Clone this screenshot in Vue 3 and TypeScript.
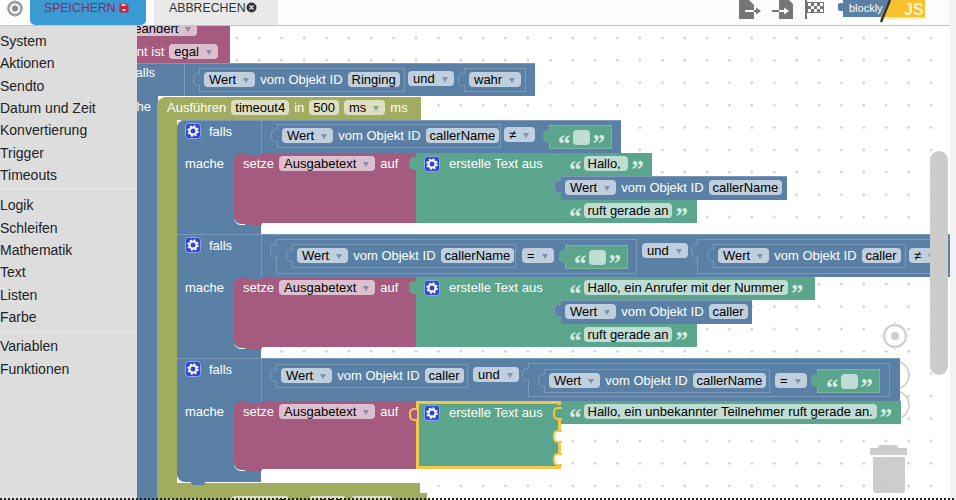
<script setup lang="ts">
type Part = { k: 't' | 'c' | 'd' | 'g' | 'o' | 'e'; s?: string }
interface BlockNode {
  x: number; y: number; w: number; h: number; c: string
  l?: number; t?: number; parts?: Part[]
  tab?: string; r?: string; bump?: boolean; notch?: boolean
}
const T = (s: string): Part => ({ k: 't', s })
const C = (s: string): Part => ({ k: 'c', s })
const D = (s: string): Part => ({ k: 'd', s })
const G: Part = { k: 'g' }
const O: Part = { k: 'o' }
const E: Part = { k: 'e' }

const groups = [
  ['System', 'Aktionen', 'Sendto', 'Datum und Zeit', 'Konvertierung', 'Trigger', 'Timeouts'],
  ['Logik', 'Schleifen', 'Mathematik', 'Text', 'Listen', 'Farbe'],
  ['Variablen', 'Funktionen'],
]

const wert = (id: string): Part[] => [D('Wert'), T('vom Objekt ID'), C(id)]
const empty = (x: number, y: number): BlockNode[] => [
  { x, y, w: 63, h: 24, c: 'green box-g', l: 8, t: 4, parts: [O, C(' '), E], tab: 'green' },
]

function ifBlock(y: number, hdrW: number, headH: number, bodyH: number, pos: 'first' | 'mid' | 'last'): BlockNode[] {
  const column = pos === 'first' ? 'rt' : pos === 'last' ? 'rb' : undefined
  return [
    { x: 177, y, w: 84, h: bodyH, c: 'blue', r: column, bump: pos === 'last' },
    { x: 177, y, w: hdrW, h: headH, c: 'blue hdr', l: 8, t: 3, r: pos === 'first' ? 'rt' : undefined, parts: [G, T('falls')] },
    { x: 185, y: y + headH + 3, w: 50, h: 18, c: 'plain', parts: [T('mache')] },
  ]
}

function setBlock(y: number, h: number, selected: boolean): BlockNode[] {
  return [
    { x: 234, y, w: 182, h, c: 'pink', l: 9, t: 3, r: 'rc', bump: true, notch: true, parts: [T('setze'), D('Ausgabetext'), T('auf')] },
    {
      x: 416, y, w: 145, h, c: selected ? 'green sel' : 'green', l: selected ? 5 : 8, t: selected ? 1 : 3,
      tab: selected ? 'yellow' : 'green', parts: [G, T('erstelle Text aus')],
    },
  ]
}

const textRow = (y: number, w: number, s: string): BlockNode => ({
  x: 561, y, w, h: 23, c: 'green', l: 8, t: 3, tab: 'green', parts: [O, C(s), E],
})
const wertRow = (y: number, w: number, id: string): BlockNode => ({
  x: 561, y, w, h: 24, c: 'blue', l: 4, t: 4, tab: 'blue', parts: wert(id),
})
const box = (x: number, y: number, w: number, h: number, parts: Part[] = [], tab = true): BlockNode => ({
  x, y, w, h, c: 'blue box', l: 4, t: 4, parts, tab: tab ? 'blue' : undefined,
})
const chip = (x: number, y: number, p: Part): BlockNode => ({ x, y, w: 60, h: 16, c: 'plain', parts: [p] })

const nodes: BlockNode[] = [
  // event block, cut off by the toolbox
  { x: 100, y: 0, w: 130, h: 63, c: 'pink' },
  { x: 122, y: 21, w: 90, h: 16, c: 'plain', parts: [D('geändert')] },
  { x: 100, y: 44, w: 125, h: 16, c: 'plain', parts: [T('Element ist'), D('egal')] },
  // outer if
  { x: 100, y: 63, w: 58, h: 437, c: 'blue' },
  { x: 100, y: 63, w: 435, h: 33, c: 'blue hdr' },
  { x: 132, y: 65, w: 40, h: 16, c: 'plain', parts: [T('falls')] },
  { x: 112, y: 99, w: 50, h: 16, c: 'plain', parts: [T('mache')] },
  box(199, 68, 206, 24, wert('Ringing')),
  chip(408, 71, D('und')),
  box(464, 68, 62, 24, [D('wahr')]),
  // timeout block
  { x: 157, y: 97, w: 20, h: 398, c: 'olive', r: 'lt' },
  { x: 157, y: 97, w: 264, h: 23, c: 'olive', l: 10, t: 3, r: 'lt', parts: [T('Ausführen'), C('timeout4'), T('in'), C('500'), D('ms'), T('ms')] },
  { x: 157, y: 483, w: 263, h: 12, c: 'olive' },
  { x: 157, y: 493, w: 270, h: 23, c: 'olive', l: 10, t: 3, parts: [T('Ausführen'), C('timeout5'), T('in'), C('1000'), D('ms'), T('ms')] },

  // first if
  ...ifBlock(120, 444, 33, 114, 'first'),
  box(277, 124, 224, 24, wert('callerName')),
  chip(504, 127, D('≠')),
  ...empty(549, 125),
  ...setBlock(153, 70, false),
  textRow(153, 91, 'Hallo, '),
  wertRow(176, 226, 'callerName'),
  textRow(200, 136, 'ruft gerade an'),

  // second if
  ...ifBlock(234, 773, 43, 124, 'mid'),
  box(276, 239, 361, 35, [], true),
  box(292, 244, 224, 24, wert('callerName')),
  chip(522, 248, D('=')),
  ...empty(565, 245),
  chip(642, 243, D('und')),
  box(697, 239, 260, 35, [], true),
  box(713, 244, 193, 24, wert('caller')),
  chip(909, 248, D('≠')),
  ...setBlock(277, 70, false),
  textRow(277, 254, 'Hallo, ein Anrufer mit der Nummer'),
  wertRow(300, 191, 'caller'),
  textRow(324, 136, 'ruft gerade an'),

  // third if
  ...ifBlock(358, 723, 43, 124, 'last'),
  box(276, 364, 192, 24, wert('caller')),
  chip(473, 367, D('und')),
  box(528, 363, 362, 34, [], true),
  box(544, 369, 226, 24, wert('callerName')),
  chip(775, 373, D('=')),
  ...empty(817, 369),
  ...setBlock(401, 68, true),
  textRow(401, 340, 'Hallo, ein unbekannter Teilnehmer ruft gerade an.'),
  { x: 553, y: 407, w: 9, h: 13, c: 'slot slot-g' },
  { x: 553, y: 430, w: 9, h: 13, c: 'slot' },
  { x: 553, y: 453, w: 9, h: 13, c: 'slot' },
]

const rect = (n: BlockNode) => ({
  left: n.x - 137 + 'px',
  top: n.y - 26 + 'px',
  width: n.w + 'px',
  height: n.h + 'px',
  paddingLeft: (n.l ?? 0) + 'px',
  paddingTop: (n.t ?? 0) + 'px',
})
</script>

<template>
  <div class="page">
    <header class="top">
      <div class="top-main">
        <svg class="target" width="30" height="25" viewBox="0 0 30 25">
          <circle cx="15" cy="8.5" r="6.500" fill="none" stroke="#999" stroke-width="2.500" />
          <circle cx="15" cy="8.5" r="3" fill="#888" />
          <path d="M15 0v2M15 15v2M6.500 8.500h2M21.500 8.500h2" stroke="#bbb" stroke-width="1.500" />
        </svg>
        <button class="save">
          <span>SPEICHERN</span>
          <svg width="10" height="10" viewBox="0 0 10 10">
            <path d="M.5 .5h7l2 2v7h-9z" fill="#c8243f" />
            <rect x="2.500" y="1" width="4" height="2" fill="#f3c0c8" />
            <rect x="3.500" y="6" width="3" height="2" fill="#f3c0c8" />
          </svg>
        </button>
        <button class="cancel">
          <span>ABBRECHEN</span>
          <svg width="11" height="11" viewBox="0 0 11 11">
            <circle cx="5.500" cy="5.500" r="5" fill="#333" />
            <path d="M3.500 3.500l4 4M7.500 3.500l-4 4" stroke="#ddd" stroke-width="1.500" />
          </svg>
        </button>
        <div class="tools">
          <svg width="24" height="20" viewBox="0 0 24 20">
            <path d="M1 0h10l5 5v14H1z" fill="#757575" />
            <path d="M7 11h10" stroke="#fff" stroke-width="2" />
            <path d="M16 11h4" stroke="#757575" stroke-width="2" />
            <path d="M18 7.500l5 3.500-5 3.500z" fill="#757575" />
          </svg>
          <svg width="22" height="20" viewBox="0 0 22 20">
            <path d="M7 0h10l4 4v15H7z" fill="#757575" />
            <path d="M0 11h7" stroke="#757575" stroke-width="2" />
            <path d="M7 11h6" stroke="#fff" stroke-width="2" />
            <path d="M12 7.500l5 3.500-5 3.500z" fill="#fff" />
          </svg>
          <svg width="21" height="20" viewBox="0 0 21 20">
            <path d="M1 0h2v19H1z" fill="#757575" />
            <path d="M3 2h17v11H3z" fill="#757575" />
            <path d="M4 3h3v3H4zM10 3h3v3h-3zM16 3h3v3h-3zM7 6h3v3H7zM13 6h3v3h-3zM4 9h3v3H4zM10 9h3v3h-3zM16 9h3v3h-3z" fill="#fff" />
          </svg>
          <svg class="logo" width="90" height="24" viewBox="0 0 90 24">
            <rect x="6" y="0" width="46" height="17" fill="#5b80a5" />
            <path d="M6 3H3a2 2 0 0 0-2 2v4a2 2 0 0 0 2 2h3z" fill="#5b80a5" />
            <path d="M52 0h36v17H44z" fill="#f7c02c" />
            <path d="M44 17h44v2H43z" fill="#fbeab5" />
            <path d="M53 0l-9 22" stroke="#333" stroke-width="2.500" />
            <text x="12" y="12" class="logo-b">blockly</text>
            <text x="67" y="15" class="logo-j">JS</text>
          </svg>
        </div>
      </div>
      <div class="edge"></div>
    </header>

    <div class="main">
      <nav class="toolbox">
        <template v-for="(group, gi) in groups" :key="gi">
          <div class="group">
            <div v-for="item in group" :key="item" class="tb-item">{{ item }}</div>
          </div>
        </template>
      </nav>

      <section class="workspace">
        <!-- zoom controls stay beneath the blocks -->
        <svg class="controls" width="40" height="100" viewBox="0 0 40 100">
          <circle cx="20" cy="17" r="11" fill="none" stroke="#ccc" stroke-width="2" />
          <circle cx="20" cy="17" r="4" fill="#ccc" />
          <path d="M20 3v5M20 26v5M6 17h5M29 17h5" stroke="#ddd" stroke-width="1.500" />
          <circle cx="20" cy="56" r="14" fill="none" stroke="#ccc" stroke-width="1.500" />
          <circle cx="20" cy="86" r="14" fill="none" stroke="#ccc" stroke-width="1.500" />
        </svg>

        <div
          v-for="(n, i) in nodes"
          :key="i"
          class="node"
          :class="[n.c, n.r]"
          :style="rect(n)"
        >
          <span v-if="n.tab" class="tab" :class="'tab-' + n.tab"></span>
          <span v-if="n.bump" class="bump"></span>
          <span v-if="n.notch" class="notch"></span>
          <template v-for="(p, pi) in n.parts" :key="pi">
            <span v-if="p.k === 't'" class="txt">{{ p.s }}</span>
            <span v-else-if="p.k === 'c'" class="chip">{{ p.s }}</span>
            <span v-else-if="p.k === 'd'" class="chip drop">{{ p.s }}<i class="arrow"></i></span>
            <svg v-else-if="p.k === 'g'" class="gear" width="16" height="16" viewBox="0 0 16 16">
              <rect x=".5" y=".5" width="15" height="15" rx="3" fill="#2f47c9" stroke="#8ea6ee" />
              <circle cx="8" cy="8" r="3.500" fill="none" stroke="#fff" stroke-width="2" />
              <circle cx="8" cy="8" r="5" fill="none" stroke="#fff" stroke-width="1.500" stroke-dasharray="2 1.930" />
            </svg>
            <span v-else-if="p.k === 'o'" class="quote">“</span>
            <span v-else class="quote">”</span>
          </template>
        </div>

        <svg class="trash" width="40" height="50" viewBox="0 0 40 50">
          <path d="M11 1h16l3 3H8z" fill="#ccc" />
          <rect x="1" y="4" width="37" height="7" fill="#ccc" />
          <path d="M4 13h32v33a3 3 0 0 1-3 3H7a3 3 0 0 1-3-3z" fill="#c4c4c4" opacity=".85" />
        </svg>
        <div class="thumb"></div>
      </section>
      <div class="edge"></div>
    </div>
    <div class="cutoff"></div>
  </div>
</template>

<style>
html, body { margin: 0; }
</style>

<style scoped>
.page {
  position: relative;
  width: 956px;
  height: 500px;
  overflow: hidden;
  display: flex;
  flex-direction: column;
  font-family: "Liberation Sans", Arial, sans-serif;
  background: #fff;
}
.top { height: 26px; display: flex; flex: none; }
.top-main {
  flex: 1;
  height: 25px;
  display: flex;
  background: #fcfcfc;
  border-bottom: 1px solid #c4c4c4;
}
.edge { width: 6px; flex: none; background: #f2f2f2; }
.target { flex: none; }
.save, .cancel {
  border: 0;
  height: 25px;
  padding: 0;
  display: flex;
  align-items: flex-start;
  font: 12.3px "Liberation Sans", Arial, sans-serif;
}
.save span, .cancel span { margin-top: 1px; line-height: 14px; }
.save {
  width: 116px;
  margin-right: 8px;
  padding-left: 14px;
  background: #3a9bd3;
  color: #8a2d60;
  border-radius: 0 0 5px 5px;
}
.save svg { margin: 3px 0 0 3px; }
.cancel {
  width: 124px;
  padding-left: 15px;
  background: #e9e9e9;
  color: #333;
}
.cancel svg { margin-top: 2px; }
.tools {
  margin-left: auto;
  margin-right: 23px;
  display: flex;
  align-items: flex-start;
  gap: 10px;
}
.logo { margin-left: 2px; }
.logo-b { font: 11px "Liberation Sans", sans-serif; fill: #fff; }
.logo-j { font: bold 16px "Liberation Sans", sans-serif; fill: #fdf0c4; }

.main { flex: 1; display: flex; min-height: 0; }
.toolbox {
  width: 137px;
  flex: none;
  background: #ddd;
  font-size: 14px;
  color: #222;
}
.group { padding: 4px 0 3px; border-bottom: 1px solid #e6e6e6; }
.group:last-child { border-bottom: 0; padding-top: 3px; }
.tb-item { height: 22.35px; line-height: 22px; }

.workspace {
  position: relative;
  flex: 1;
  overflow: hidden;
  background-color: #fff;
  background-image: radial-gradient(circle at 10.3px 12px, #d0d0d0 1px, transparent 1.6px);
  background-size: 22.4px 22.4px;
}
.controls { position: absolute; left: 738px; top: 293px; }
.trash { position: absolute; left: 732px; top: 418px; }
.thumb {
  position: absolute;
  left: 793px;
  top: 125px;
  width: 18px;
  height: 224px;
  border-radius: 9px;
  background: #ccc;
}

.node {
  position: absolute;
  box-sizing: border-box;
  display: flex;
  align-items: flex-start;
  gap: 5px;
  color: #fff;
  font-size: 13px;
  line-height: 15px;
  white-space: nowrap;
}
.blue { background: #5b80a5; box-shadow: inset 0 1px 0 #7b99b8; }
.pink { background: #a55b80; }
.green { background: #5ba58c; }
.olive { background: #a2ac5f; }
.plain { background: transparent; }
.hdr { box-shadow: inset 0 1px 0 #7b99b8; }
.hdr .txt { margin-top: 1px; }
.hdr::after {
  content: "";
  position: absolute;
  left: 84px;
  top: 0;
  bottom: 0;
  width: 1px;
  background: #7b99b8;
}
.box { box-shadow: none; border: 1px solid #7b99b8; padding-top: 3px !important; }
.box-g { border: 1px solid #78b5a0; background: #5ba58c; }
.rt { border-top-left-radius: 8px; }
.rb { border-bottom-left-radius: 8px; }
.lt { border-top-left-radius: 9px; }
.rc { border-top-left-radius: 8px; border-bottom-left-radius: 8px; }
.rc::after {
  content: "";
  position: absolute;
  left: 0;
  bottom: -1.5px;
  width: 11px;
  height: 7px;
  border-bottom: 1.5px solid #fff;
  border-radius: 0 0 0 8px;
  box-sizing: border-box;
}
.sel { border: 3px solid #f1c84b; background: #5ba58c; overflow: visible; }
.slot {
  background: #fff;
  border: 2px solid #f1c84b;
  border-right: 0;
  border-radius: 5px 0 0 5px;
}
.slot-g { background: #5ba58c; }

.tab {
  position: absolute;
  left: -7px;
  top: 4px;
  width: 7px;
  height: 13px;
  border-radius: 5px 0 0 5px;
}
.tab-green { background: #5ba58c; }
.tab-blue { background: #5b80a5; border: 1px solid #7b99b8; border-right: 0; box-sizing: border-box; }
.tab-yellow {
  background: #a55b80;
  left: -10px;
  width: 8px;
  border: 2px solid #f1c84b;
  border-right: 0;
  box-sizing: border-box;
}
.bump {
  position: absolute;
  left: 14px;
  bottom: -3px;
  width: 14px;
  height: 3px;
  border-radius: 0 0 6px 6px;
  background: inherit;
}
.notch {
  position: absolute;
  left: 14px;
  top: 0;
  width: 14px;
  height: 3px;
  border-radius: 0 0 6px 6px;
  background: #5b80a5;
}

.txt { line-height: 15px; }
.chip {
  display: inline-flex;
  align-items: center;
  height: 15px;
  padding: 0 4px;
  min-width: 9px;
  border-radius: 4px;
  background: rgba(255, 255, 255, .62);
  color: #000;
  white-space: pre;
}
.drop { padding: 0 6px 0 5px; }
.arrow {
  width: 0;
  height: 0;
  margin-left: 7px;
  margin-top: 1px;
  border: 3.5px solid transparent;
  border-top: 5px solid rgba(70, 100, 130, .55);
  border-bottom: 0;
}
.gear { flex: none; }
.green .gear, .sel .gear { margin-right: 4px; }
.hdr .gear { margin-right: 3px; }
.quote {
  font: bold 25px/25px "Liberation Serif", serif;
  color: #d6ebe2;
  height: 15px;
  margin: 1px -3px 0 0;
}
.chip + .quote { margin: 1px 0 0 -2px; }
.cutoff {
  position: absolute;
  left: 0;
  right: 0;
  bottom: 0;
  height: 2px;
  background-image: repeating-linear-gradient(90deg, #222 0 2px, transparent 2px 4px);
}
</style>
